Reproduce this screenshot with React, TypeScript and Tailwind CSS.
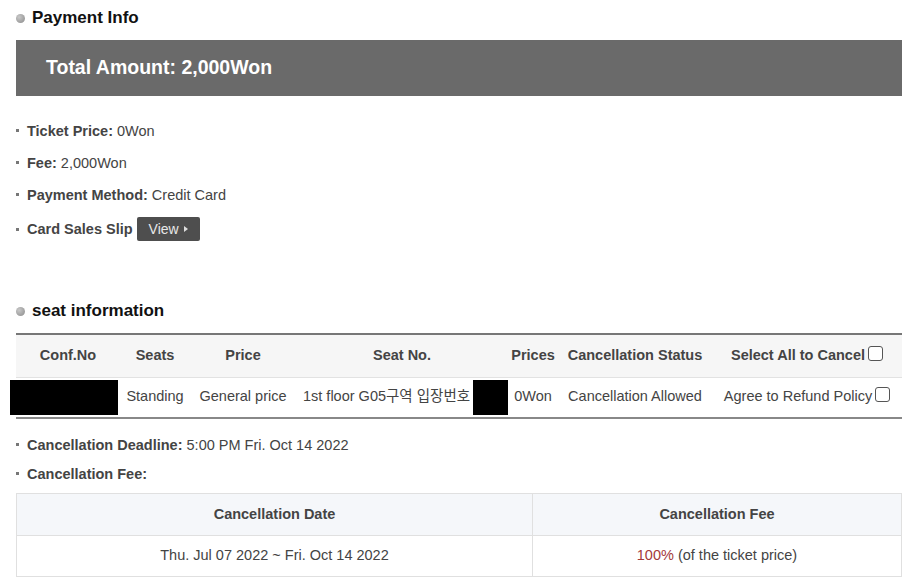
import React from "react";

const Check = () => (
  <span className="inline-block w-[15px] h-[15px] border border-[#555] rounded-[3px] bg-white align-[-1px] ml-[3px]" />
);

const Bullet = () => <span className="inline-block w-[3px] h-[3px] bg-[#777] mr-[8px] align-[4px]" />;

const Heading = ({ children }: { children: React.ReactNode }) => (
  <div className="flex items-center h-[20px] pl-[16px]">
    <span className="w-[9px] h-[9px] rounded-full bg-[radial-gradient(circle_at_35%_35%,#c8c8c8,#8a8a8a)] mr-[7px]" />
    <span className="text-[17px] font-bold text-[#111]">{children}</span>
  </div>
);

export default function App() {
  return (
    <div className="w-[908px] h-[581px] bg-white overflow-hidden font-['Liberation_Sans','Noto_Sans_CJK_KR',Arial,sans-serif] text-[#444]">
      <div className="pt-[8px]">
        <Heading>Payment Info</Heading>
      </div>
      <div className="mt-[12px] ml-[16px] mr-[6px] h-[56px] bg-[#6a6a6a] flex items-center pl-[30px]">
        <span className="text-white font-bold text-[19.5px]">Total Amount: 2,000Won</span>
      </div>
      <div className="pl-[16px] mt-[26px] flex flex-col gap-[13px] text-[14.5px] leading-[19px]">
        <div><Bullet /><b className="text-[#444]">Ticket Price:</b> 0Won</div>
        <div><Bullet /><b className="text-[#444]">Fee:</b> 2,000Won</div>
        <div><Bullet /><b className="text-[#444]">Payment Method:</b> Credit Card</div>
        <div className="flex items-center -mt-[1px]">
          <Bullet />
          <b className="text-[#444]">Card Sales Slip</b>
          <span className="ml-[4px] inline-flex items-center h-[24px] px-[12px] rounded-[2px] bg-[#4e4e4e] text-[#e8e8e8] text-[14px]">
            View
            <span className="ml-[5px] inline-block w-0 h-0 border-y-[3px] border-y-transparent border-l-[4px] border-l-[#ddd]" />
          </span>
        </div>
      </div>

      <div className="mt-[60px]">
        <Heading>seat information</Heading>
      </div>
      <div className="ml-[16px] mr-[6px] mt-[12px]">
        <table className="w-full table-fixed border-collapse text-[14.5px]">
          <colgroup>
            <col className="w-[104px]" />
            <col className="w-[70px]" />
            <col className="w-[106px]" />
            <col className="w-[212px]" />
            <col className="w-[50px]" />
            <col className="w-[154px]" />
            <col />
          </colgroup>
          <thead>
            <tr className="h-[43px] bg-[#f6f6f6] border-t-2 border-t-[#777] border-b border-b-[#e2e2e2] text-[#444]">
              <th className="font-bold">Conf.No</th>
              <th className="font-bold">Seats</th>
              <th className="font-bold">Price</th>
              <th className="font-bold">Seat No.</th>
              <th className="font-bold">Prices</th>
              <th className="font-bold whitespace-nowrap">Cancellation Status</th>
              <th className="font-bold whitespace-nowrap">Select All to Cancel<Check /></th>
            </tr>
          </thead>
          <tbody>
            <tr className="h-[41px] border-b-2 border-b-[#888]">
              <td>
                <div className="-ml-[6px] w-[108px] h-[35px] bg-black" />
              </td>
              <td className="text-center">Standing</td>
              <td className="text-center whitespace-nowrap">General price</td>
              <td className="whitespace-nowrap">
                <div className="flex items-center pl-[7px]">
                  <span>1st floor G05구역 입장번호</span>
                  <span className="ml-[3px] w-[38px] h-[35px] bg-black" />
                </div>
              </td>
              <td className="text-center">0Won</td>
              <td className="text-center whitespace-nowrap">Cancellation Allowed</td>
              <td className="text-center whitespace-nowrap">Agree to Refund Policy<Check /></td>
            </tr>
          </tbody>
        </table>
      </div>

      <div className="pl-[16px] mt-[17px] flex flex-col gap-[10px] text-[14.5px] leading-[19px]">
        <div><Bullet /><b>Cancellation Deadline:</b> 5:00 PM Fri. Oct 14 2022</div>
        <div><Bullet /><b>Cancellation Fee:</b></div>
      </div>

      <div className="ml-[16px] mr-[6px] mt-[9px]">
        <table className="w-full table-fixed border-collapse text-[14.5px] border border-[#e0e0e0]">
          <colgroup>
            <col className="w-[516px]" />
            <col />
          </colgroup>
          <thead>
            <tr className="h-[42px] bg-[#f5f7fa] border-b border-b-[#e0e0e0]">
              <th className="font-bold border-r border-r-[#e0e0e0]">Cancellation Date</th>
              <th className="font-bold">Cancellation Fee</th>
            </tr>
          </thead>
          <tbody>
            <tr className="h-[41px]">
              <td className="text-center border-r border-r-[#e0e0e0]">Thu. Jul 07 2022 ~ Fri. Oct 14 2022</td>
              <td className="text-center"><span className="text-[#a33a3a]">100%</span> (of the ticket price)</td>
            </tr>
          </tbody>
        </table>
      </div>
    </div>
  );
}
